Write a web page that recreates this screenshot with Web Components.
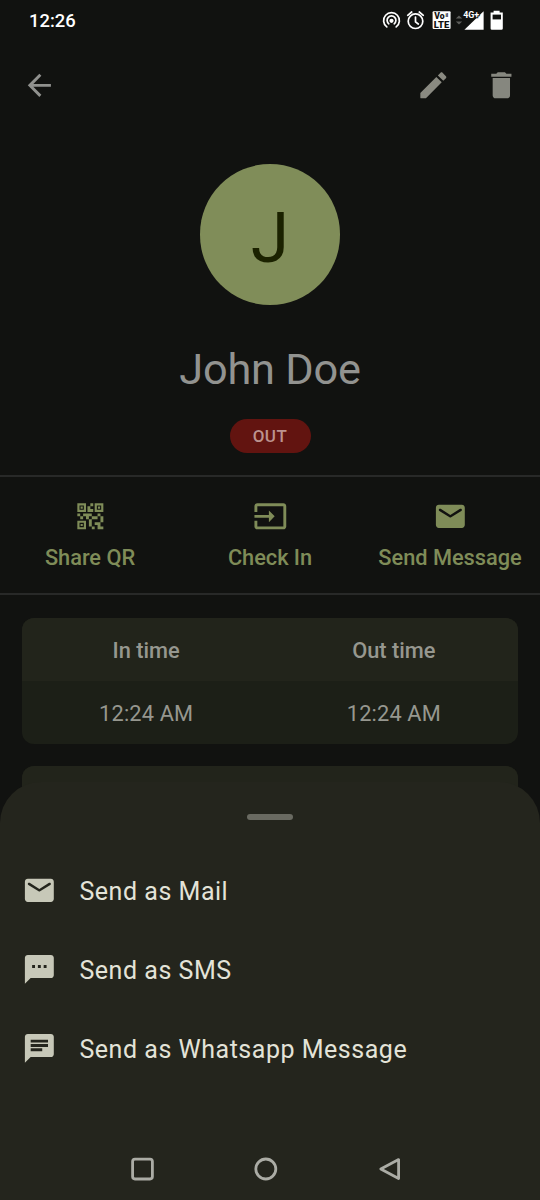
<!DOCTYPE html>
<html lang="en">
<head>
<meta charset="utf-8">
<title>John Doe</title>
<style>
html,body{margin:0;background:#111210}
body{font-family:Roboto,"Liberation Sans",sans-serif}
</style>
</head>
<body>
<visitor-page></visitor-page>
<script>
const ICONS = {
  back: '<path d="M20 11H7.83l5.59-5.59L12 4l-8 8 8 8 1.41-1.41L7.83 13H20v-2z"/>',
  edit: '<path d="M3 17.46v3.04c0 .28.22.5.5.5h3.04c.13 0 .26-.05.35-.15L17.81 9.94l-3.75-3.75L3.15 17.1c-.1.1-.15.22-.15.36zM20.71 7.04c.39-.39.39-1.02 0-1.41l-2.34-2.34c-.39-.39-1.02-.39-1.41 0l-1.83 1.83 3.75 3.75 1.83-1.83z"/>',
  trash: '<path d="M6 19c0 1.1.9 2 2 2h8c1.1 0 2-.9 2-2V7H6v12zM19 4h-3.5l-1-1h-5l-1 1H5v2h14V4z"/>',
  qr: '<path d="M15 21h-2v-2h2zM13 14h-2v5h2zM21 12h-2v4h2zM19 10h-2v2h2zM7 12H5v2h2zM5 10H3v2h2zM12 5h2V3h-2zM4.5 4.5v3h3v-3zM9 9H3V3h6zM4.5 16.5v3h3v-3zM9 21H3v-6h6zM16.5 4.5v3h3v-3zM21 9h-6V3h6zM19 19v-3h-4v2h2v3h4v-2zM17 12h-4v2h4zM13 10H7v2h2v2h2v-2h2zM14 9V7h-2V5h-2v4zM6.75 5.25h-1.5v1.5h1.5zM6.75 17.25h-1.5v1.5h1.5zM18.75 5.25h-1.5v1.5h1.5z" fill-rule="evenodd"/>',
  checkin: '<path d="M21 3.01H3c-1.1 0-2 .9-2 2V9h2V4.99h18v14.03H3V15H1v4.01c0 1.1.9 1.98 2 1.98h18c1.1 0 2-.88 2-1.98v-14c0-1.11-.9-2-2-2zM11 16l4-4-4-4v3H1v2h10v3z"/>',
  mail: '<path d="M20 4H4c-1.1 0-2 .9-2 2v12c0 1.1.9 2 2 2h16c1.1 0 2-.9 2-2V6c0-1.1-.9-2-2-2zm-.4 4.25l-7.07 4.42c-.32.2-.74.2-1.06 0L4.4 8.25c-.25-.16-.4-.43-.4-.72 0-.67.73-1.07 1.3-.72L12 11l6.7-4.19c.57-.35 1.3.05 1.3.72 0 .29-.15.56-.4.72z"/>',
  sms: '<path d="M20 2H4c-1.1 0-2 .9-2 2v18l4-4h14c1.1 0 2-.9 2-2V4c0-1.1-.9-2-2-2zM9 11H7V9h2v2zm4 0h-2V9h2v2zm4 0h-2V9h2v2z"/>',
  chat: '<path d="M20 2H4c-1.1 0-2 .9-2 2v18l4-4h14c1.1 0 2-.9 2-2V4c0-1.1-.9-2-2-2zM6 9h12v2H6V9zm8 5H6v-2h8v2zm4-6H6V6h12v2z" fill-rule="evenodd"/>'
};

function define(name, html) {
  customElements.define(name, class extends HTMLElement {
    constructor() {
      super();
      this.attachShadow({ mode: 'open' }).innerHTML = html;
    }
  });
}

customElements.define('m-icon', class extends HTMLElement {
  connectedCallback() {
    if (this.shadowRoot) return;
    this.attachShadow({ mode: 'open' }).innerHTML =
      '<style>:host{display:block;width:34.7px;height:34.7px;flex:none}svg{display:block;width:100%;height:100%;fill:currentColor}</style>' +
      '<svg viewBox="0 0 24 24">' + ICONS[this.getAttribute('name')] + '</svg>';
  }
});

define('status-bar', `
<style>
:host{display:flex;justify-content:space-between;height:42px;box-sizing:border-box;padding:0 30px 0 29px;color:#fff}
.time{font-size:18.4px;font-weight:500;line-height:42px}
svg{display:block}
text{font-family:Roboto,sans-serif;font-weight:900}
</style>
<span class="time">12:26</span>
<svg width="130" height="42" viewBox="380 0 130 42">
  <g fill="none" stroke="#fff" stroke-width="1.7" stroke-linecap="round">
    <path d="M386.8 26.9a7.9 7.9 0 1 1 9.4 0"/>
    <path d="M388.8 23.8a4.4 4.4 0 1 1 5.4 0"/>
    <circle cx="415.5" cy="21.2" r="7.3"/>
    <path d="M415.5 17v4.8l2.8 2.2M407.7 15.3l4-3.3M423.3 15.3l-4-3.3"/>
  </g>
  <circle cx="391.5" cy="20.8" r="2.1" fill="#fff"/>
  <rect x="432.6" y="11.2" width="18" height="17.8" rx="1" fill="#fff"/>
  <text x="434.2" y="19.1" font-size="8.6" fill="#111210">Vo</text>
  <text x="445.4" y="16.6" font-size="5" fill="#111210">il</text>
  <text x="433.8" y="27.7" font-size="8.8" fill="#111210" textLength="15.4" lengthAdjust="spacingAndGlyphs">LTE</text>
  <path d="M455.8 18.6l3.2-3.2 3.2 3.2zM455.8 21.4l3.2 3.2 3.2-3.2z" fill="#5c5d5a"/>
  <path d="M483.6 11.2v18.6h-19.2z" fill="#fff"/>
  <text x="463.2" y="18.2" font-size="9.4" fill="#fff" stroke="#111210" stroke-width="2" paint-order="stroke" style="font-weight:700" textLength="16" lengthAdjust="spacingAndGlyphs">4G+</text>
  <path d="M493.6 10.8h6v1.6h3.2v16q0 1.4-1.4 1.4h-9.4q-1.4 0-1.4-1.4v-16h3z" fill="#fff"/>
  <path d="M492.6 14.6h8.4v4.8h-8.4z" fill="#111210"/>
</svg>`);

define('app-bar', `
<style>
:host{display:flex;align-items:center;height:86px;padding:0 21.5px 0 22.2px;box-sizing:border-box;color:#8a8a81}
.gap{flex:1}
.back{color:#90918e}
.del{margin-left:33px;color:#86877f}
</style>
<m-icon class="back" name="back"></m-icon><span class="gap"></span>
<m-icon class="edit" name="edit"></m-icon><m-icon class="del" name="trash"></m-icon>`);

define('profile-head', `
<style>
:host{display:flex;flex-direction:column;align-items:center;height:349px;padding-top:36px;box-sizing:border-box;border-bottom:2px solid #282928}
.avatar{width:140.6px;height:140.6px;border-radius:50%;background:#808d59;color:#1b2200;font-size:69.5px;line-height:149.5px;text-align:center}
.name{font-size:43.3px;letter-spacing:-.2px;line-height:52px;color:#929390;margin-top:39.4px}
.badge{margin-top:23px;width:81px;height:34px;border-radius:17px;background:#621410;color:#bc938f;font-size:17px;font-weight:500;letter-spacing:.5px;line-height:35px;text-align:center}
</style>
<div class="avatar">J</div><div class="name"><slot></slot></div><div class="badge">OUT</div>`);

define('action-item', `
<style>
:host{display:flex;flex-direction:column;align-items:center;color:#7f8c58;font-size:21.8px;font-weight:500;letter-spacing:-.03px;line-height:30px;white-space:nowrap}
</style>
<slot name="icon"></slot><span><slot></slot></span>`);

define('action-row', `
<style>
:host{display:grid;grid-template-columns:repeat(3,1fr);height:118px;box-sizing:border-box;padding-top:22.2px;border-bottom:2px solid #282928}
m-icon{margin-bottom:9px}
</style>
<action-item><m-icon slot="icon" name="qr"></m-icon>Share QR</action-item>
<action-item><m-icon slot="icon" name="checkin"></m-icon>Check In</action-item>
<action-item><m-icon slot="icon" name="mail"></m-icon>Send Message</action-item>`);

define('time-card', `
<style>
:host{display:block;margin:22.5px 22.3px 0;border-radius:12px;overflow:hidden;background:#1c1f17;color:#96978f;font-size:21.8px;text-align:center}
.row{display:grid;grid-template-columns:1fr 1fr;height:63px;line-height:66px}
.head{background:#22241b;font-weight:500;letter-spacing:0}
.val{letter-spacing:.15px}
</style>
<div class="row head"><slot name="head"></slot></div>
<div class="row val"><slot></slot></div>`);

define('sheet-item', `
<style>
:host{display:flex;align-items:center;height:79px;padding-left:22px;color:#e3e3d8;font-size:25px;letter-spacing:.52px;white-space:nowrap}
::slotted(m-icon){color:#c7c8b8;margin-right:22.8px}
span{padding-top:3px}
</style>
<slot name="icon"></slot><span><slot></slot></span>`);

define('bottom-sheet', `
<style>
:host{display:flex;flex-direction:column;position:absolute;left:0;right:0;bottom:0;height:418px;box-sizing:border-box;background:#24251d;border-radius:41px 41px 0 0}
.handle{width:45.4px;height:6px;border-radius:3px;background:#696a61;margin:32px auto 30.6px}
.gap{flex:1}
nav{height:62px}
nav svg{display:block}
</style>
<div class="handle"></div>
<sheet-item><m-icon slot="icon" name="mail"></m-icon>Send as Mail</sheet-item>
<sheet-item><m-icon slot="icon" name="sms"></m-icon>Send as SMS</sheet-item>
<sheet-item><m-icon slot="icon" name="chat"></m-icon>Send as Whatsapp Message</sheet-item>
<div class="gap"></div>
<nav><svg width="540" height="62" viewBox="0 1138 540 62" fill="none" stroke="#abaca5" stroke-width="2.8" stroke-linejoin="round">
<rect x="132.6" y="1159.2" width="19.8" height="19.8" rx="2.4"/>
<circle cx="265.8" cy="1169" r="10"/>
<path d="M398.6 1159.6v19L380.8 1169z"/></svg></nav>`);

define('visitor-page', `
<style>
:host{display:block;position:relative;width:540px;height:1200px;overflow:hidden;background:#111210}
</style>
<status-bar></status-bar>
<app-bar></app-bar>
<profile-head>John Doe</profile-head>
<action-row></action-row>
<time-card><span slot="head">In time</span><span slot="head">Out time</span><span>12:24 AM</span><span>12:24 AM</span></time-card>
<time-card></time-card>
<bottom-sheet></bottom-sheet>`);
</script>
</body>
</html>
